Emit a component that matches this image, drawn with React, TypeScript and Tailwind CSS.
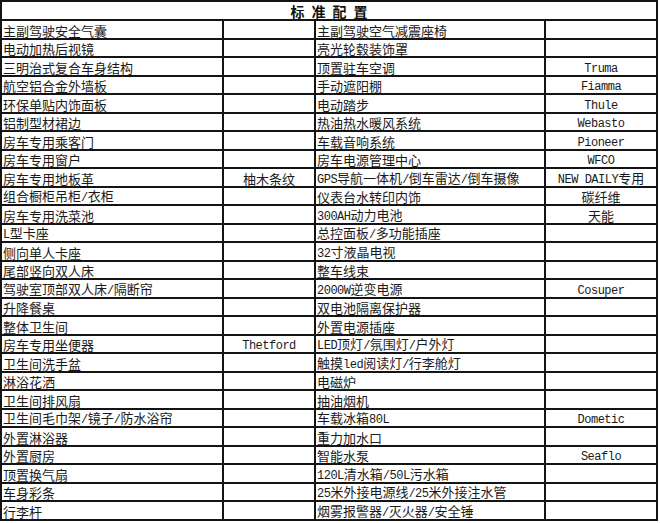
import React from "react";

const rows: [string, string, string, string][] = [
  ["主副驾驶安全气囊", "", "主副驾驶空气减震座椅", ""],
  ["电动加热后视镜", "", "亮光轮毂装饰罩", ""],
  ["三明治式复合车身结构", "", "顶置驻车空调", "Truma"],
  ["航空铝合金外墙板", "", "手动遮阳棚", "Fiamma"],
  ["环保单贴内饰面板", "", "电动踏步", "Thule"],
  ["铝制型材裙边", "", "热油热水暖风系统", "Webasto"],
  ["房车专用乘客门", "", "车载音响系统", "Pioneer"],
  ["房车专用窗户", "", "房车电源管理中心", "WFCO"],
  ["房车专用地板革", "柚木条纹", "GPS导航一体机/倒车雷达/倒车摄像", "NEW DAILY专用"],
  ["组合橱柜吊柜/衣柜", "", "仪表台水转印内饰", "碳纤维"],
  ["房车专用洗菜池", "", "300AH动力电池", "天能"],
  ["L型卡座", "", "总控面板/多功能插座", ""],
  ["侧向单人卡座", "", "32寸液晶电视", ""],
  ["尾部竖向双人床", "", "整车线束", ""],
  ["驾驶室顶部双人床/隔断帘", "", "2000W逆变电源", "Cosuper"],
  ["升降餐桌", "", "双电池隔离保护器", ""],
  ["整体卫生间", "", "外置电源插座", ""],
  ["房车专用坐便器", "Thetford", "LED顶灯/氛围灯/户外灯", ""],
  ["卫生间洗手盆", "", "触摸led阅读灯/行李舱灯", ""],
  ["淋浴花洒", "", "电磁炉", ""],
  ["卫生间排风扇", "", "抽油烟机", ""],
  ["卫生间毛巾架/镜子/防水浴帘", "", "车载冰箱80L", "Dometic"],
  ["外置淋浴器", "", "重力加水口", ""],
  ["外置厨房", "", "智能水泵", "Seaflo"],
  ["顶置换气扇", "", "120L清水箱/50L污水箱", ""],
  ["车身彩条", "", "25米外接电源线/25米外接注水管", ""],
  ["行李杆", "", "烟雾报警器/灭火器/安全锤", ""],
];

function Txt({ s }: { s: string }) {
  const parts = s.match(/[\x00-\x7F]+|[^\x00-\x7F]+/g) || [];
  return (
    <span className="whitespace-nowrap">
      {parts.map((p, i) =>
        /^[\x00-\x7F]+$/.test(p) ? (
          <span key={i} className="font-['Liberation_Mono',monospace] text-[12px] tracking-[-0.5px]">
            {p}
          </span>
        ) : (
          <span key={i}>{p}</span>
        )
      )}
    </span>
  );
}

export default function App() {
  return (
    <div className="w-[660px] h-[523px] bg-white text-[#1a1a1a] font-['Noto_Sans_CJK_SC',sans-serif]">
      <div className="w-[658px] border-l-2 border-t-2 border-[#141414]">
        <div className="h-[19px] border-r-2 border-b-2 border-[#141414] flex items-center justify-center">
          <span className="font-bold text-[14px] leading-none tracking-[7px] pl-[7px] text-[#111]">标准配置</span>
        </div>
        {rows.map((r, i) => (
          <div key={i} className="flex h-[18.5px] text-[13px] leading-none">
            <div className="w-[222px] shrink-0 border-r-2 border-b-2 border-[#141414] flex items-center pl-px pt-[2px] overflow-hidden">
              <Txt s={r[0]} />
            </div>
            <div className="w-[92px] shrink-0 border-r-2 border-b-2 border-[#141414] flex items-center justify-center pt-[2px] overflow-hidden">
              <Txt s={r[1]} />
            </div>
            <div className="w-[230px] shrink-0 border-r-2 border-b-2 border-[#141414] flex items-center pl-px pt-[2px] overflow-hidden">
              <Txt s={r[2]} />
            </div>
            <div className="w-[112px] shrink-0 border-r-2 border-b-2 border-[#141414] flex items-center justify-center pt-[2px] overflow-hidden">
              <Txt s={r[3]} />
            </div>
          </div>
        ))}
      </div>
    </div>
  );
}
